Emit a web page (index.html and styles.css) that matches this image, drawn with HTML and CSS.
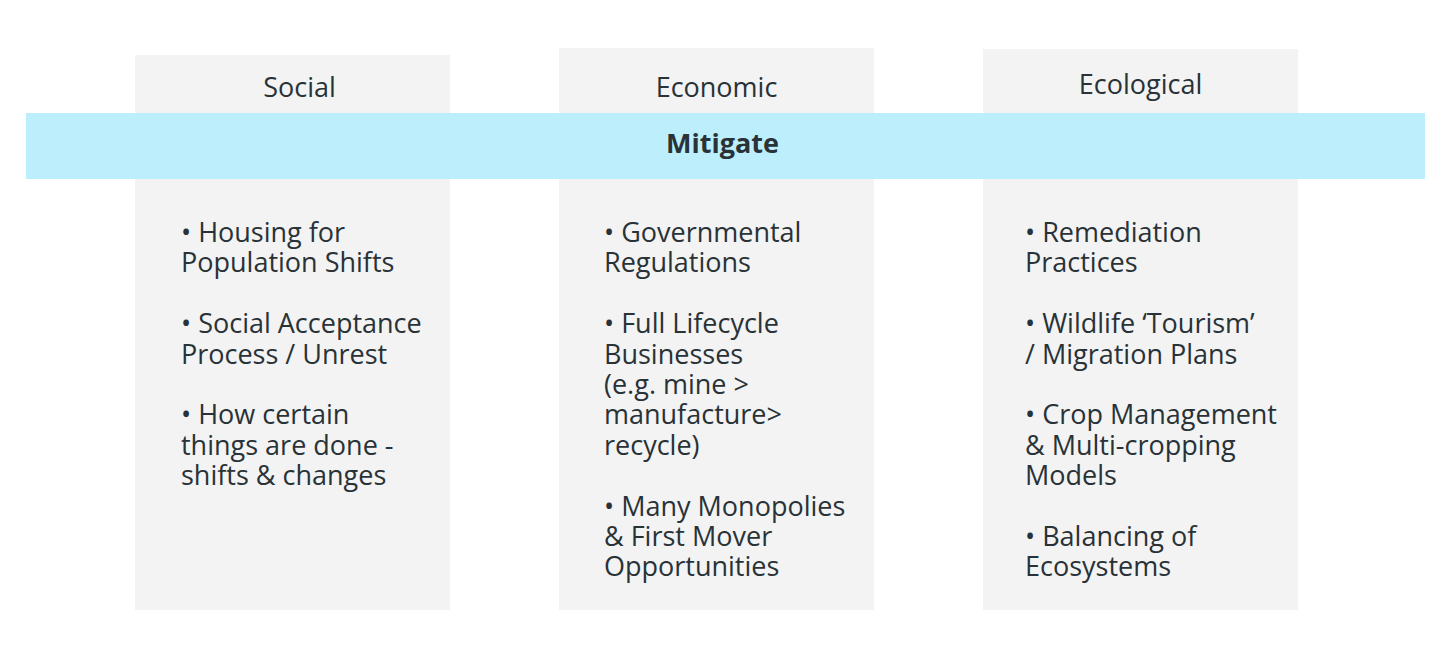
FILE: index.html
```html
<!DOCTYPE html>
<html lang="en">
<head>
<meta charset="utf-8">
<title>Mitigate</title>
<link rel="stylesheet" href="styles.css">
</head>
<body>
<div class="stage">
  <div class="columns">
    <section class="col col-social">
      <h2 class="col-head">Social</h2>
      <div class="band-space"></div>
      <ul class="items">
        <li>• Housing for<br>Population Shifts</li>
        <li>• Social Acceptance<br>Process / Unrest</li>
        <li>• How certain<br>things are done -<br>shifts &amp; changes</li>
      </ul>
    </section>
    <section class="col col-economic">
      <h2 class="col-head">Economic</h2>
      <div class="band-space"></div>
      <ul class="items">
        <li>• Governmental<br>Regulations</li>
        <li>• Full Lifecycle<br>Businesses<br>(e.g. mine &gt;<br>manufacture&gt;<br>recycle)</li>
        <li>• Many Monopolies<br>&amp; First Mover<br>Opportunities</li>
      </ul>
    </section>
    <section class="col col-ecological">
      <h2 class="col-head">Ecological</h2>
      <div class="band-space"></div>
      <ul class="items">
        <li>• Remediation<br>Practices</li>
        <li>• Wildlife ‘Tourism’<br>/ Migration Plans</li>
        <li>• Crop Management<br>&amp; Multi-cropping<br>Models</li>
        <li>• Balancing of<br>Ecosystems</li>
      </ul>
    </section>
  </div>
  <div class="band">Mitigate</div>
</div>
</body>
</html>
```

FILE: styles.css
```css
html, body {
  margin: 0;
  padding: 0;
  background: #ffffff;
}
body {
  width: 1456px;
  height: 672px;
  overflow: hidden;
  font-family: "Open Sans", "Noto Sans", sans-serif;
  color: #283237;
}
.stage {
  position: relative;
  width: 1456px;
  height: 672px;
}
.columns {
  display: flex;
  align-items: flex-start;
  gap: 109px;
  padding: 48px 0 0 135px;
}
.col {
  width: 315px;
  background: #f3f3f3;
  display: flex;
  flex-direction: column;
}
.col-social { margin-top: 7px; height: 555px; }
.col-economic { height: 562px; }
.col-ecological { margin-top: 1px; height: 561px; }
.col-head {
  flex: none;
  margin: 0;
  font-size: 27px;
  font-weight: 400;
  line-height: 30px;
  text-align: center;
  display: flex;
  align-items: center;
  justify-content: center;
  box-sizing: border-box;
}
.col-social .col-head { height: 58px; padding-top: 6px; padding-left: 14px; }
.col-economic .col-head { height: 65px; padding-top: 13px; }
.col-ecological .col-head { height: 64px; padding-top: 6px; }
.band-space {
  height: 66px;
  flex: none;
}
.items {
  flex: none;
  list-style: none;
  margin: 0;
  padding: 38px 0 0 46px;
  font-size: 27px;
  line-height: 30.4px;
}
.items li {
  margin: 0 0 30.4px 0;
  white-space: nowrap;
}
.items li:last-child { margin-bottom: 0; }
.col-economic .items { padding-left: 45px; }
.col-ecological .items { padding-left: 42px; }
.band {
  position: absolute;
  left: 26px;
  top: 113px;
  width: 1399px;
  height: 66px;
  box-sizing: border-box;
  padding: 0 6px 7px 0;
  background: #bdeefb;
  display: flex;
  align-items: center;
  justify-content: center;
  font-size: 27px;
  font-weight: 700;
  color: #283237;
}
```
